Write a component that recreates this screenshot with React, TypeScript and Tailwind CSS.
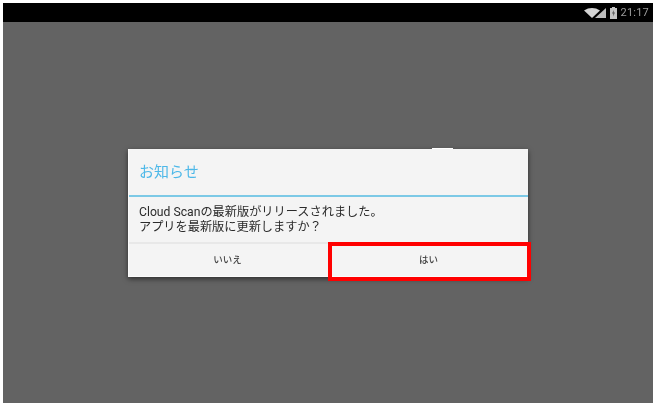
const font = { fontFamily: '"Roboto", "Noto Sans CJK JP", sans-serif' };

const StatusIcons = () => (
  <div className="flex items-center text-[#9c9c9c] blur-[0.4px]">
    <svg width="16" height="10" viewBox="0 0 16 10">
      <path d="M0 2.5C5 -0.8 11 -0.8 16 2.5L8 10Z" fill="#d4d4d4" />
    </svg>
    <svg width="11" height="10" viewBox="0 0 11 10" className="-ml-[5px]">
      <path d="M11 0V10H0Z" fill="#bdbdbd" />
    </svg>
    <svg width="7" height="12" viewBox="0 0 7 12" className="ml-[4px]">
      <path d="M2 0H5V1H7V12H0V1H2Z" fill="#c4c4c4" />
      <path d="M3.8 3L2 6.5H3.3L3 9.5L5 5.5H3.7Z" fill="#555" />
    </svg>
    <span className="ml-[4px] text-[11px] leading-none tracking-[0.2px]">21:17</span>
  </div>
);

export default function App() {
  return (
    <div className="w-[656px] h-[408px] bg-white p-[3px] pb-[5px]" style={font}>
      <div className="w-full h-full flex flex-col bg-[#636363]">
        <div className="h-[19px] bg-black flex items-center justify-end pr-[4px]">
          <StatusIcons />
        </div>
        <div className="flex-1 flex flex-col items-center pt-[127px]">
          <div className="relative w-[400px] h-[128px] flex flex-col bg-[#f4f4f4] border-b border-l border-[#fbfbfb] shadow-[0_2px_5px_rgba(0,0,0,0.55)]">
            <div className="absolute left-[303px] -top-[1px] w-[21px] h-[1px] bg-white" />
            <div className="h-[45px] flex items-center pl-[10px] pt-[1px] text-[15px] text-[#4db8e8] border-b-2 border-[#7cc9e6] box-content">
              <span className="blur-[0.3px]">お知らせ</span>
            </div>
            <div className="flex-1 px-[10px] pt-[8px] text-[12.2px] leading-[15px] text-[#2b2b2b] blur-[0.3px]">
              <p>Cloud Scanの最新版がリリースされました。</p>
              <p>アプリを最新版に更新しますか？</p>
            </div>
            <div className="h-[34px] flex border-t-2 border-[#e8e8e8] text-[9.5px] font-medium text-[#444444]">
              <div className="w-[200px] flex items-center justify-center pr-[3px]">
                <span className="blur-[0.3px]">いいえ</span>
              </div>
              <div className="relative flex-1 flex items-center justify-center">
                <span className="blur-[0.3px]">はい</span>
                <div className="absolute -left-[1px] -right-[3px] -top-[2px] -bottom-[5px] border-4 border-[#ff0000]" />
              </div>
            </div>
          </div>
        </div>
      </div>
    </div>
  );
}
